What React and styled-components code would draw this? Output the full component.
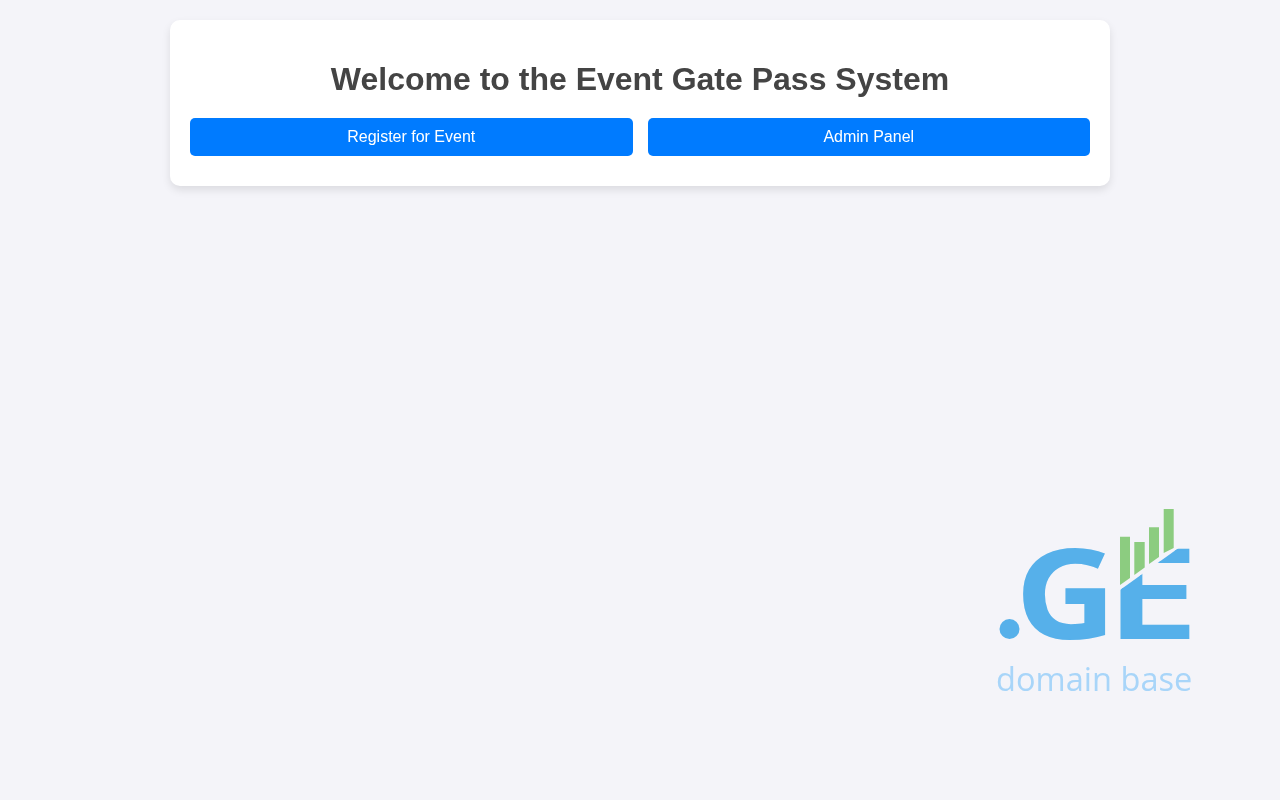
import styled, { createGlobalStyle } from 'styled-components';

const GlobalStyle = createGlobalStyle`
	html,
	body {
		margin: 0;
		padding: 0;
		min-height: 100vh;
		background: #f4f4f9;
		font-family: 'Liberation Sans', Arial, sans-serif;
	}
`;

const Page = styled.div`
	padding: 20px 0;
`;

const Card = styled.main`
	box-sizing: border-box;
	width: 940px;
	margin: 0 auto;
	padding: 41px 20px 30px;
	background: #fff;
	border-radius: 10px;
	box-shadow: 0 4px 8px rgba(0, 0, 0, 0.1);
	will-change: transform;
`;

const Title = styled.h1`
	margin: 0 0 20px;
	font-size: 32px;
	line-height: 37px;
	font-weight: 700;
	text-align: center;
	color: #444;
`;

const Actions = styled.div`
	display: flex;
	gap: 15px;
`;

const ActionButton = styled.a`
	flex: 1;
	height: 38px;
	display: flex;
	align-items: center;
	justify-content: center;
	background: #007bff;
	border-radius: 5px;
	color: #fff;
	font-size: 16px;
	text-decoration: none;
`;

const Watermark = styled.svg`
	position: fixed;
	right: 80px;
	bottom: 100px;
	width: 210px;
	height: 200px;
	filter: blur(0.4px);
`;

const LogoMark = styled.text`
	font-family: 'Open Sans', sans-serif;
	font-weight: ${(p) => p.$weight};
	font-size: ${(p) => p.$size}px;
	fill: #56b0ea;
	stroke: #56b0ea;
	stroke-width: ${(p) => p.$stroke}px;
`;

const LogoCaption = styled.text`
	font-family: 'Open Sans', sans-serif;
	font-size: 32.6px;
	fill: #a8d5f9;
`;

// viewBox uses page coordinates of the logo corner (990, 500)
const Logo = () => (
	<Watermark viewBox="990 500 210 200" aria-label="domain base">
		<defs>
			<clipPath id="e-cut">
				<polygon points="1120,590 1180,547 1200,547 1200,645 1120,645" />
			</clipPath>
		</defs>
		<circle cx="1009.5" cy="629" r="10" fill="#56b0ea" />
		<LogoMark $weight={700} $size={126} $stroke={0} transform="translate(1015 638.5) scale(1.11 1)">
			G
		</LogoMark>
		<g clipPath="url(#e-cut)">
			<LogoMark $weight={600} $size={124} $stroke={2} transform="translate(1106.5 637.5) scale(1.32 1)">
				E
			</LogoMark>
		</g>
		<g fill="#8ccc80">
			<polygon points="1120,536.7 1130,536.7 1130,578 1120,585" />
			<polygon points="1134.3,542 1144.7,542 1144.7,567.5 1134.3,575" />
			<polygon points="1149,527.3 1159,527.3 1159,557 1149,564" />
			<polygon points="1163.7,509 1173.7,509 1173.7,548 1163.7,553" />
		</g>
		<LogoCaption x="996" y="691">domain base</LogoCaption>
	</Watermark>
);

const App = () => (
	<Page>
		<GlobalStyle />
		<Card>
			<Title>Welcome to the Event Gate Pass System</Title>
			<Actions>
				<ActionButton href="#register">Register for Event</ActionButton>
				<ActionButton href="#admin">Admin Panel</ActionButton>
			</Actions>
		</Card>
		<Logo />
	</Page>
);

export default App;
